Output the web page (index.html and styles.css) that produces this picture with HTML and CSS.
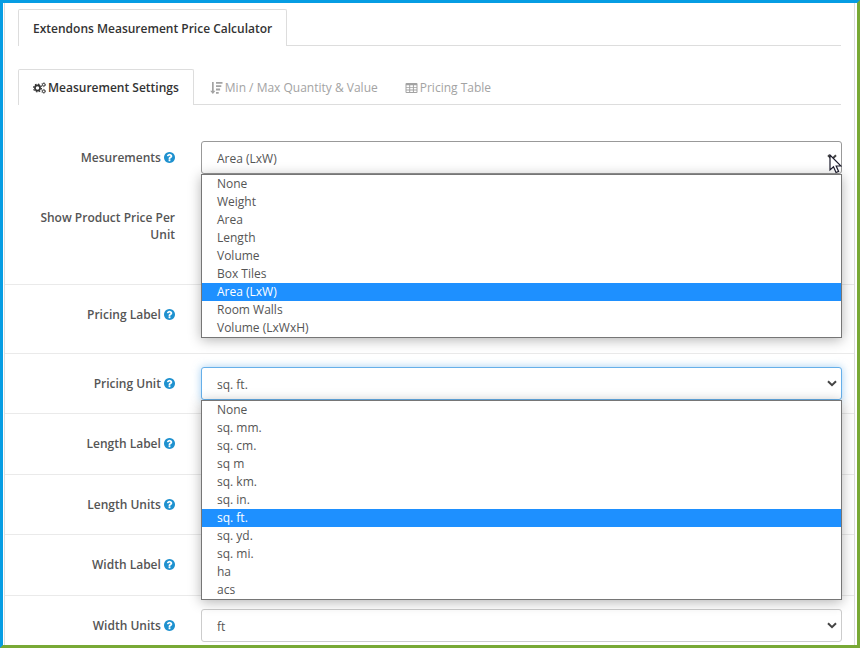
FILE: index.html
```html
<!DOCTYPE html>
<html lang="en">
<head>
<meta charset="utf-8">
<title>Extendons Measurement Price Calculator</title>
<link rel="stylesheet" href="styles.css">
</head>
<body>
<svg class="sprite" aria-hidden="true">
  <symbol id="help" viewBox="128 128 1536 1536"><path d="M1024 1376v-192q0-14-9-23t-23-9h-192q-14 0-23 9t-9 23v192q0 14 9 23t23 9h192q14 0 23-9t9-23zm256-672q0-88-55.500-163t-138.500-116-170-41q-243 0-371 213-15 24 8 42l132 100q7 6 19 6 16 0 25-12 53-68 86-92 34-24 86-24 48 0 85.500 26t37.500 59q0 38-20 61t-68 45q-63 28-115.500 86.500t-52.500 125.500v36q0 14 9 23t23 9h192q14 0 23-9t9-23q0-19 21.500-49.500t54.500-49.500q32-18 49-28.500t46-35 44.500-48 28-60.500 12.500-81zm384 192q0 209-103 385.500t-279.500 279.500-385.500 103-385.500-103-279.500-279.500-103-385.500 103-385.500 279.500-279.500 385.500-103 385.500 103 279.500 279.500 103 385.500z"/></symbol>
  <symbol id="chevron" viewBox="0 0 10 7"><path d="M1 1.200l4 4 4-4" fill="none" stroke="currentColor" stroke-width="2"/></symbol>
</svg>
<main class="panel">
  <nav class="tabs primary">
    <a class="tab active" href="#calculator">Extendons Measurement Price Calculator</a>
  </nav>
  <nav class="tabs">
    <a class="tab active" href="#settings"><svg class="icon" viewBox="0 0 13 12" aria-hidden="true"><g fill="none" stroke="currentColor"><circle cx="4.500" cy="6" r="2.600" stroke-width="1.700"/><circle cx="4.500" cy="6" r="3.900" stroke-width="1.200" stroke-dasharray="1.600 1.463"/><circle cx="10.700" cy="2.700" r="1.300" stroke-width="1"/><circle cx="10.700" cy="2.700" r="2" stroke-width=".7" stroke-dasharray="1 1.090"/><circle cx="10.700" cy="9.300" r="1.300" stroke-width="1"/><circle cx="10.700" cy="9.300" r="2" stroke-width=".7" stroke-dasharray="1 1.090"/></g></svg> Measurement Settings</a>
    <a class="tab" href="#limits"><svg class="icon" viewBox="0 0 13 12" aria-hidden="true"><path fill="currentColor" d="M2 0h1.700v8.800h1.800L2.850 12 .2 8.800H2zM6 0h6.500v1.800H6zM6 3.300h5.300v1.800H6zM6 6.600h4.100v1.800H6zM6 9.900h2.700v1.800H6z"/></svg> Min / Max Quantity &amp; Value</a>
    <a class="tab" href="#pricing"><svg class="icon" viewBox="0 0 13 12" aria-hidden="true"><path fill="currentColor" fill-rule="evenodd" d="M1.500 1h10q1 0 1 1v8q0 1-1 1h-10q-1 0-1-1V2q0-1 1-1zM1.500 3.200v1.700h2.700V3.200zM5.200 3.200v1.700h2.700V3.200zM8.900 3.200v1.700h2.600V3.200zM1.500 5.800v1.700h2.700V5.800zM5.200 5.800v1.700h2.700V5.800zM8.900 5.800v1.700h2.600V5.800zM1.500 8.400v1.700h2.700V8.400zM5.200 8.400v1.700h2.700V8.400zM8.900 8.400v1.700h2.600V8.400z"/></svg> Pricing Table</a>
  </nav>
  <form class="form">
    <div class="row plain">
      <label for="measurements">Mesurements <svg class="help"><use href="#help"/></svg></label>
      <div class="field open">
        <select id="measurements"><option>Area (LxW)</option></select>
        <svg class="chevron"><use href="#chevron"/></svg>
        <ul class="menu" role="listbox" aria-label="Mesurements">
          <li role="option">None</li>
          <li role="option">Weight</li>
          <li role="option">Area</li>
          <li role="option">Length</li>
          <li role="option">Volume</li>
          <li role="option">Box Tiles</li>
          <li role="option" class="selected" aria-selected="true">Area (LxW)</li>
          <li role="option">Room Walls</li>
          <li role="option">Volume (LxWxH)</li>
        </ul>
        <svg class="pointer" viewBox="0 0 13 20" aria-hidden="true"><path d="M1 1v15l3.500-3.200L7 18.500l2.600-1.100L7.200 12H12z" fill="#fff" stroke="#1b1b2b" stroke-width="1.200"/></svg>
      </div>
    </div>
    <div class="row tall">
      <label for="per-unit">Show Product Price Per Unit</label>
      <div class="field"><input type="checkbox" id="per-unit"></div>
    </div>
    <div class="row medium">
      <label for="pricing-label">Pricing Label <svg class="help"><use href="#help"/></svg></label>
      <div class="field"><input type="text" id="pricing-label"></div>
    </div>
    <div class="row">
      <label for="pricing-unit">Pricing Unit <svg class="help"><use href="#help"/></svg></label>
      <div class="field open">
        <select id="pricing-unit" class="focused"><option>sq. ft.</option></select>
        <svg class="chevron"><use href="#chevron"/></svg>
        <ul class="menu" role="listbox" aria-label="Pricing Unit">
          <li role="option">None</li>
          <li role="option">sq. mm.</li>
          <li role="option">sq. cm.</li>
          <li role="option">sq m</li>
          <li role="option">sq. km.</li>
          <li role="option">sq. in.</li>
          <li role="option" class="selected" aria-selected="true">sq. ft.</li>
          <li role="option">sq. yd.</li>
          <li role="option">sq. mi.</li>
          <li role="option">ha</li>
          <li role="option">acs</li>
        </ul>
      </div>
    </div>
    <div class="row">
      <label for="length-label">Length Label <svg class="help"><use href="#help"/></svg></label>
      <div class="field"><input type="text" id="length-label"></div>
    </div>
    <div class="row">
      <label for="length-units">Length Units <svg class="help"><use href="#help"/></svg></label>
      <div class="field"><select id="length-units"></select></div>
    </div>
    <div class="row">
      <label for="width-label">Width Label <svg class="help"><use href="#help"/></svg></label>
      <div class="field"><input type="text" id="width-label"></div>
    </div>
    <div class="row last">
      <label for="width-units">Width Units <svg class="help"><use href="#help"/></svg></label>
      <div class="field">
        <select id="width-units"><option>ft</option></select>
        <svg class="chevron"><use href="#chevron"/></svg>
      </div>
    </div>
  </form>
</main>
</body>
</html>
```
FILE: styles.css
```css
* { box-sizing: border-box; }

body {
  margin: 0;
  min-height: 100vh;
  display: flex;
  padding: 0 2px 0 1px;
  border: 3px solid #78a935;
  border-top-color: #069de3;
  border-left-color: #069de3;
  background: #fff;
  color: #555;
  font: 12px/17px "Open Sans", "Noto Sans", sans-serif;
}

.sprite { position: absolute; width: 0; height: 0; }

.panel {
  flex: 1;
  min-width: 0;
  border: solid #ddd;
  border-width: 0 1px;
}

.tabs {
  display: flex;
  margin: 0 13px 24px;
  border-bottom: 1px solid #ddd;
}

.tabs.primary { margin-top: 6px; margin-bottom: 23px; }

.tab {
  display: flex;
  align-items: center;
  gap: 2px;
  height: 36px;
  margin-bottom: -1px;
  padding: 0 10px 0 15px;
  border: 1px solid transparent;
  border-bottom: 0;
  color: #a3a3a3;
  text-decoration: none;
}

.tab.active {
  padding: 0 14px;
  border-color: #ddd;
  border-radius: 2px 2px 0 0;
  background: #fff;
  color: #333;
  font-weight: 600;
}

.primary .tab { height: 37px; }

.icon { width: 13px; height: 12px; }

.row {
  display: grid;
  grid-template-columns: 170px 1fr;
  column-gap: 26px;
  align-items: start;
  padding: 13px 12px 13px 0;
  border-bottom: 1px solid #eaeaea;
}

.row.plain { margin-top: -1px; border-bottom-color: transparent; }
.row.tall { min-height: 97px; }
.row.medium { min-height: 69px; }
.row.last { padding-bottom: 2px; border-bottom: 0; }

label {
  padding: 8px 0 0 32px;
  text-align: right;
  font-weight: 600;
}

.help {
  width: 11px;
  height: 11px;
  vertical-align: -1px;
  fill: #1e91cf;
}

.field { position: relative; }
.field.open { z-index: 1; }

select,
input[type="text"] {
  display: block;
  width: 100%;
  height: 33px;
  padding: 2px 15px 0;
  border: 1px solid #ccc;
  border-radius: 3px;
  outline: 0;
  appearance: none;
  background: #fff;
  color: #555;
  font: inherit;
}

input[type="text"] { height: 34px; }
input[type="checkbox"] { margin: 8px; }

.open select { border-color: #999; }

.open .focused {
  border-color: #66afe9;
  box-shadow: 0 0 8px rgba(102, 175, 233, 0.6);
}

.chevron {
  position: absolute;
  top: 13px;
  right: 5px;
  width: 10px;
  height: 7px;
  color: #444;
  pointer-events: none;
}

.menu {
  position: absolute;
  top: 100%;
  left: 0;
  right: 0;
  margin: 0;
  padding: 0;
  border: 1px solid #767676;
  background: #fff;
  box-shadow: 0 2px 12px rgba(0, 0, 0, 0.3);
  line-height: 18px;
  list-style: none;
}

.menu li { padding: 0 15px; }
.menu .selected { background: #1e90ff; color: #fff; }

.pointer {
  position: absolute;
  top: 13px;
  right: 0;
  width: 13px;
  height: 20px;
}
```
